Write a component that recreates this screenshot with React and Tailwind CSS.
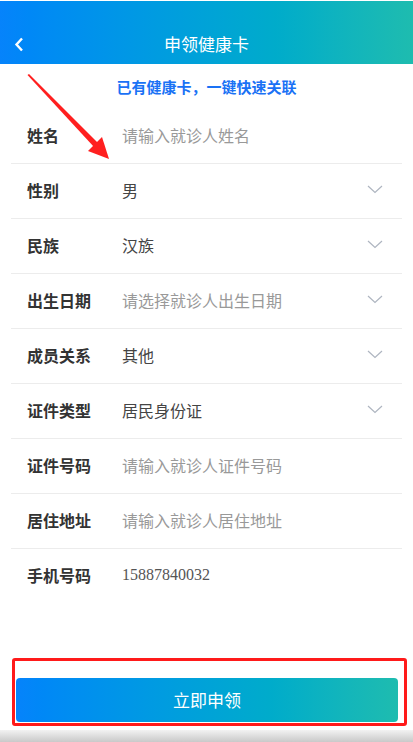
const rows = [
  { label: "姓名", value: "请输入就诊人姓名", placeholder: true },
  { label: "性别", value: "男", select: true },
  { label: "民族", value: "汉族", select: true },
  { label: "出生日期", value: "请选择就诊人出生日期", placeholder: true, select: true },
  { label: "成员关系", value: "其他", select: true },
  { label: "证件类型", value: "居民身份证", select: true },
  { label: "证件号码", value: "请输入就诊人证件号码", placeholder: true },
  { label: "居住地址", value: "请输入就诊人居住地址", placeholder: true },
  { label: "手机号码", value: "15887840032", phone: true },
];

function Chevron() {
  return (
    <svg width="16" height="9" viewBox="0 0 16 9" fill="none">
      <polyline points="1,1 8,7.5 15,1" stroke="#aeb5c0" strokeWidth="1.2" />
    </svg>
  );
}

export default function App() {
  return (
    <div className="relative w-[413px] h-[742px] overflow-hidden bg-white flex flex-col font-['Noto_Sans_CJK_SC','Noto_Sans',sans-serif]">
      {/* Header */}
      <div className="h-[1px] bg-white" />
      <header className="relative h-[63px] flex items-center justify-center bg-gradient-to-r from-[#0683fb] to-[#1ebcaf]">
        <svg className="absolute left-[14px] top-[36px]" width="10" height="15" viewBox="0 0 10 15" fill="none">
          <polyline points="8,1.5 2.5,7.5 8,13.5" stroke="#fff" strokeWidth="2.4" />
        </svg>
        <h1 className="mt-[22px] text-[17px] text-white leading-none">申领健康卡</h1>
      </header>

      {/* Link */}
      <div className="h-[45px] flex items-center justify-center">
        <span className="text-[15px] font-bold text-[#1a72f5] leading-none">已有健康卡，一键快速关联</span>
      </div>

      {/* Form */}
      <div className="mx-[11px]">
        {rows.map((r, i) => (
          <div
            key={r.label}
            className={`h-[55px] flex items-center pl-[16px] pr-[19px] pb-[3px] ${i < rows.length - 1 ? "border-b border-[#ececec]" : ""}`}
          >
            <span className="w-[95px] text-[16px] font-bold text-[#333]">{r.label}</span>
            <span
              className={`flex-1 text-[16px] ${
                r.phone
                  ? "font-['Liberation_Serif',serif] text-[#555]"
                  : r.placeholder
                  ? "text-[#999]"
                  : "text-[#444]"
              }`}
            >
              {r.value}
            </span>
            {r.select && <Chevron />}
          </div>
        ))}
      </div>

      <div className="flex-1" />

      {/* Submit */}
      <div className="px-[16px] pr-[15px] pb-[8px]">
        <button className="w-full h-[44px] rounded-[4px] bg-gradient-to-r from-[#0683fb] to-[#1ebcaf] text-white text-[17px]">
          立即申领
        </button>
      </div>
      <div className="h-[12px] bg-gradient-to-b from-[#f2f2f2] to-[#c9c9c9]" />

      {/* Annotations */}
      <div className="absolute left-[12px] top-[658px] w-[395px] h-[68px] border-[3px] border-[#ff1a1a] rounded-[3px]" />
      <svg className="absolute left-0 top-0 pointer-events-none" width="413" height="742">
        <polygon points="27.5,75 29,74 98,143 94,147" fill="#ff1f1f" />
        <polygon points="109,159 88,151 102,137" fill="#ff1f1f" />
      </svg>
    </div>
  );
}
